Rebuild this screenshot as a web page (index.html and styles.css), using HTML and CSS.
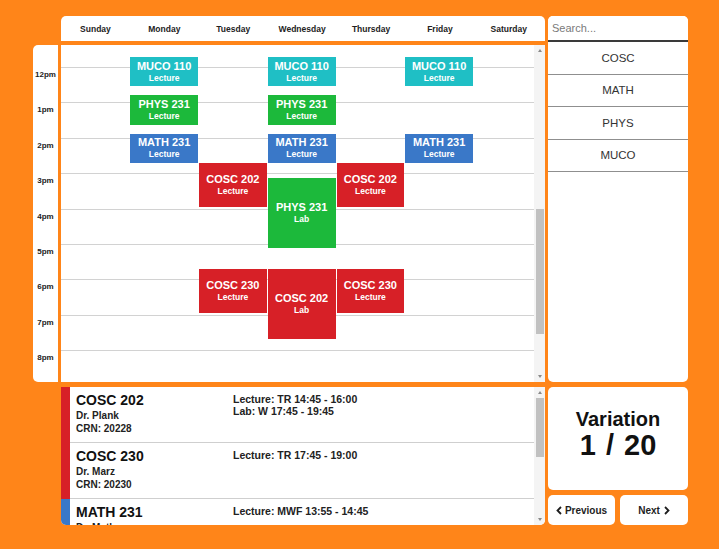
FILE: index.html
```html
<!DOCTYPE html>
<html>
<head>
<meta charset="utf-8">
<title>Schedule</title>
<link rel="stylesheet" href="styles.css">
</head>
<body>
<div class="app">
  <div class="days">
    <div class="day">Sunday</div>
    <div class="day">Monday</div>
    <div class="day">Tuesday</div>
    <div class="day">Wednesday</div>
    <div class="day">Thursday</div>
    <div class="day">Friday</div>
    <div class="day">Saturday</div>
  </div>

  <aside class="panel">
    <input class="search" type="text" placeholder="Search...">
    <div class="subject">COSC</div>
    <div class="subject">MATH</div>
    <div class="subject">PHYS</div>
    <div class="subject">MUCO</div>
  </aside>

  <div class="times">
    <div class="time">12pm</div>
    <div class="time">1pm</div>
    <div class="time">2pm</div>
    <div class="time">3pm</div>
    <div class="time">4pm</div>
    <div class="time">5pm</div>
    <div class="time">6pm</div>
    <div class="time">7pm</div>
    <div class="time">8pm</div>
  </div>

  <div class="calendar">
    <div class="lines">
      <div class="line"></div><div class="line"></div><div class="line"></div>
      <div class="line"></div><div class="line"></div><div class="line"></div>
      <div class="line"></div><div class="line"></div><div class="line"></div>
    </div>
    <div class="columns">
      <div class="col"></div>
      <div class="col">
        <div class="event muco" style="top:12px;height:29px"><span class="ev-title">MUCO 110</span><span class="ev-sub">Lecture</span></div>
        <div class="event phys" style="top:50px;height:29.5px"><span class="ev-title">PHYS 231</span><span class="ev-sub">Lecture</span></div>
        <div class="event math" style="top:88.5px;height:29px"><span class="ev-title">MATH 231</span><span class="ev-sub">Lecture</span></div>
      </div>
      <div class="col">
        <div class="event cosc" style="top:117.5px;height:44px"><span class="ev-title">COSC 202</span><span class="ev-sub">Lecture</span></div>
        <div class="event cosc" style="top:223.5px;height:44px"><span class="ev-title">COSC 230</span><span class="ev-sub">Lecture</span></div>
      </div>
      <div class="col">
        <div class="event muco" style="top:12px;height:29px"><span class="ev-title">MUCO 110</span><span class="ev-sub">Lecture</span></div>
        <div class="event phys" style="top:50px;height:29.5px"><span class="ev-title">PHYS 231</span><span class="ev-sub">Lecture</span></div>
        <div class="event math" style="top:88.5px;height:29px"><span class="ev-title">MATH 231</span><span class="ev-sub">Lecture</span></div>
        <div class="event phys" style="top:133px;height:70px"><span class="ev-title">PHYS 231</span><span class="ev-sub">Lab</span></div>
        <div class="event cosc" style="top:224px;height:70px"><span class="ev-title">COSC 202</span><span class="ev-sub">Lab</span></div>
      </div>
      <div class="col">
        <div class="event cosc" style="top:117.5px;height:44px"><span class="ev-title">COSC 202</span><span class="ev-sub">Lecture</span></div>
        <div class="event cosc" style="top:223.5px;height:44px"><span class="ev-title">COSC 230</span><span class="ev-sub">Lecture</span></div>
      </div>
      <div class="col">
        <div class="event muco" style="top:12px;height:29px"><span class="ev-title">MUCO 110</span><span class="ev-sub">Lecture</span></div>
        <div class="event math" style="top:88.5px;height:29px"><span class="ev-title">MATH 231</span><span class="ev-sub">Lecture</span></div>
      </div>
      <div class="col"></div>
    </div>
    <div class="scrollbar">
      <div class="arrow up"></div>
      <div class="track"><div class="thumb" style="top:153px;height:125px"></div></div>
      <div class="arrow down"></div>
    </div>
  </div>

  <div class="courses">
    <div class="course-items">
      <div class="course">
        <div class="bar cosc"></div>
        <div class="course-body">
          <div class="info">
            <div class="code">COSC 202</div>
            <div class="meta">Dr. Plank</div>
            <div class="meta">CRN: 20228</div>
          </div>
          <div class="sessions">
            <div>Lecture: TR 14:45 - 16:00</div>
            <div>Lab: W 17:45 - 19:45</div>
          </div>
        </div>
      </div>
      <div class="course">
        <div class="bar cosc"></div>
        <div class="course-body">
          <div class="info">
            <div class="code">COSC 230</div>
            <div class="meta">Dr. Marz</div>
            <div class="meta">CRN: 20230</div>
          </div>
          <div class="sessions">
            <div>Lecture: TR 17:45 - 19:00</div>
          </div>
        </div>
      </div>
      <div class="course">
        <div class="bar math"></div>
        <div class="course-body">
          <div class="info">
            <div class="code">MATH 231</div>
            <div class="meta">Dr. Math</div>
            <div class="meta">CRN: 20231</div>
          </div>
          <div class="sessions">
            <div>Lecture: MWF 13:55 - 14:45</div>
          </div>
        </div>
      </div>
    </div>
    <div class="scrollbar">
      <div class="arrow up"></div>
      <div class="track"><div class="thumb" style="top:0px;height:59px"></div></div>
      <div class="arrow down"></div>
    </div>
  </div>

  <div class="variation-area">
    <div class="variation">
      <div class="var-label">Variation</div>
      <div class="var-count">1 / 20</div>
    </div>
    <div class="nav">
      <button class="nav-btn prev"><svg width="6" height="9" viewBox="0 0 6 9"><polyline points="5,1 1.5,4.5 5,8" fill="none" stroke="#1e1e1e" stroke-width="1.8"/></svg>Previous</button>
      <button class="nav-btn next">Next<svg width="6" height="9" viewBox="0 0 6 9"><polyline points="1,1 4.5,4.5 1,8" fill="none" stroke="#1e1e1e" stroke-width="1.8"/></svg></button>
    </div>
  </div>
</div>
</body>
</html>
```

FILE: styles.css
```css
* { box-sizing: border-box; }

html, body { margin: 0; padding: 0; }

body {
  width: 719px;
  height: 549px;
  overflow: hidden;
  background: #ff8519;
  font-family: "Liberation Sans", Arial, sans-serif;
  color: #1e1e1e;
}

.app {
  display: grid;
  grid-template-columns: 25px 484px 140px;
  grid-template-rows: 25px 337px 139px;
  column-gap: 3px;
  row-gap: 4px;
  padding: 16px 0 0 33px;
}

/* day header */
.days {
  grid-column: 2;
  grid-row: 1;
  background: #fff;
  border-radius: 5px 5px 0 0;
  display: grid;
  grid-template-columns: repeat(7, 68.9px);
  align-items: center;
  font-size: 8.5px;
  font-weight: bold;
  color: #222;
}
.day { text-align: center; }

/* search panel */
.panel {
  grid-column: 3;
  grid-row: 1 / 3;
  background: #fff;
  border-radius: 5px;
  display: flex;
  flex-direction: column;
}
.search {
  height: 26px;
  border: none;
  border-bottom: 2px solid #3a3a3a;
  border-radius: 5px 5px 0 0;
  padding: 0 4px;
  font-family: "Liberation Sans", Arial, sans-serif;
  font-size: 11px;
  color: #333;
  outline: none;
  background: #fff;
}
.search::placeholder { color: #7a7a7a; }
.subject {
  height: 32.5px;
  border-bottom: 1px solid #8f8f8f;
  display: flex;
  align-items: center;
  justify-content: center;
  font-size: 11.5px;
  color: #333;
}

/* time column */
.times {
  grid-column: 1;
  grid-row: 2;
  background: #fff;
  border-radius: 5px 0 0 5px;
  padding-top: 25px;
  overflow: hidden;
}
.time {
  height: 35.4px;
  text-align: center;
  font-size: 8px;
  font-weight: bold;
  line-height: 10px;
  color: #222;
}

/* calendar body */
.calendar {
  grid-column: 2;
  grid-row: 2;
  background: #fff;
  position: relative;
  overflow: hidden;
}
.lines {
  padding-top: 22px;
  padding-right: 11px;
}
.line {
  height: 35.4px;
  border-top: 1px solid #d2d2d2;
}
.columns {
  position: absolute;
  top: 0;
  left: 0;
  bottom: 0;
  display: grid;
  grid-template-columns: repeat(7, 68.75px);
}
.col { position: relative; }

.event {
  position: absolute;
  left: 0.5px;
  right: 0.5px;
  display: flex;
  flex-direction: column;
  align-items: center;
  justify-content: center;
  color: #fff;
  font-weight: bold;
  text-align: center;
}
.ev-title { font-size: 11px; line-height: 13px; }
.ev-sub { font-size: 8.5px; line-height: 10.5px; }

.muco { background: #1fbfc5; }
.phys { background: #1cb93b; }
.math { background: #3a78c8; }
.cosc { background: #d72027; }

/* fake scrollbars */
.scrollbar {
  position: absolute;
  top: 0;
  right: 0;
  bottom: 0;
  width: 11px;
  background: #f4f4f4;
  display: flex;
  flex-direction: column;
}
.arrow {
  height: 11px;
  display: flex;
  align-items: center;
  justify-content: center;
}
.arrow::before {
  content: "";
  width: 0;
  height: 0;
  border-left: 2.5px solid transparent;
  border-right: 2.5px solid transparent;
}
.arrow.up::before { border-bottom: 3px solid #8a8a8a; }
.arrow.down::before { border-top: 3px solid #8a8a8a; }
.track {
  flex: 1;
  position: relative;
}
.thumb {
  position: absolute;
  left: 1.5px;
  right: 1.5px;
  background: #c1c1c1;
}

/* course list */
.courses {
  grid-column: 2;
  grid-row: 3;
  margin-top: 1px;
  background: #fff;
  border-radius: 0 0 5px 5px;
  position: relative;
  overflow: hidden;
}
.course-items {
  margin-right: 11px;
}
.course {
  display: flex;
  height: 56px;
}
.bar { width: 9px; flex: none; }
.course-body {
  flex: 1;
  display: flex;
  border-bottom: 1px solid #cfcfcf;
}
.info {
  width: 163px;
  padding: 5px 0 0 6px;
  font-weight: bold;
}
.code {
  font-size: 14px;
  line-height: 17px;
  color: #111;
}
.meta {
  font-size: 10px;
  line-height: 13px;
  color: #222;
}
.sessions {
  padding-top: 5.5px;
  font-size: 10.5px;
  line-height: 12.5px;
  font-weight: bold;
  color: #222;
}

/* variation */
.variation-area {
  grid-column: 3;
  grid-row: 3;
  margin-top: 1px;
  display: flex;
  flex-direction: column;
  gap: 5px;
}
.variation {
  height: 104px;
  background: #fff;
  border-radius: 5px;
  padding-top: 21px;
  text-align: center;
  font-weight: bold;
  color: #111;
}
.var-label {
  font-size: 20px;
  line-height: 22px;
}
.var-count {
  font-size: 29px;
  line-height: 30px;
  word-spacing: 2px;
}
.nav {
  display: flex;
  gap: 5px;
  height: 30px;
}
.nav-btn {
  border: none;
  background: #fff;
  border-radius: 5px;
  display: flex;
  align-items: center;
  justify-content: center;
  gap: 3px;
  font-family: "Liberation Sans", Arial, sans-serif;
  font-size: 10px;
  font-weight: bold;
  color: #1e1e1e;
  padding: 0;
}
.prev { width: 67px; }
.next { width: 68px; gap: 4px; }
```
